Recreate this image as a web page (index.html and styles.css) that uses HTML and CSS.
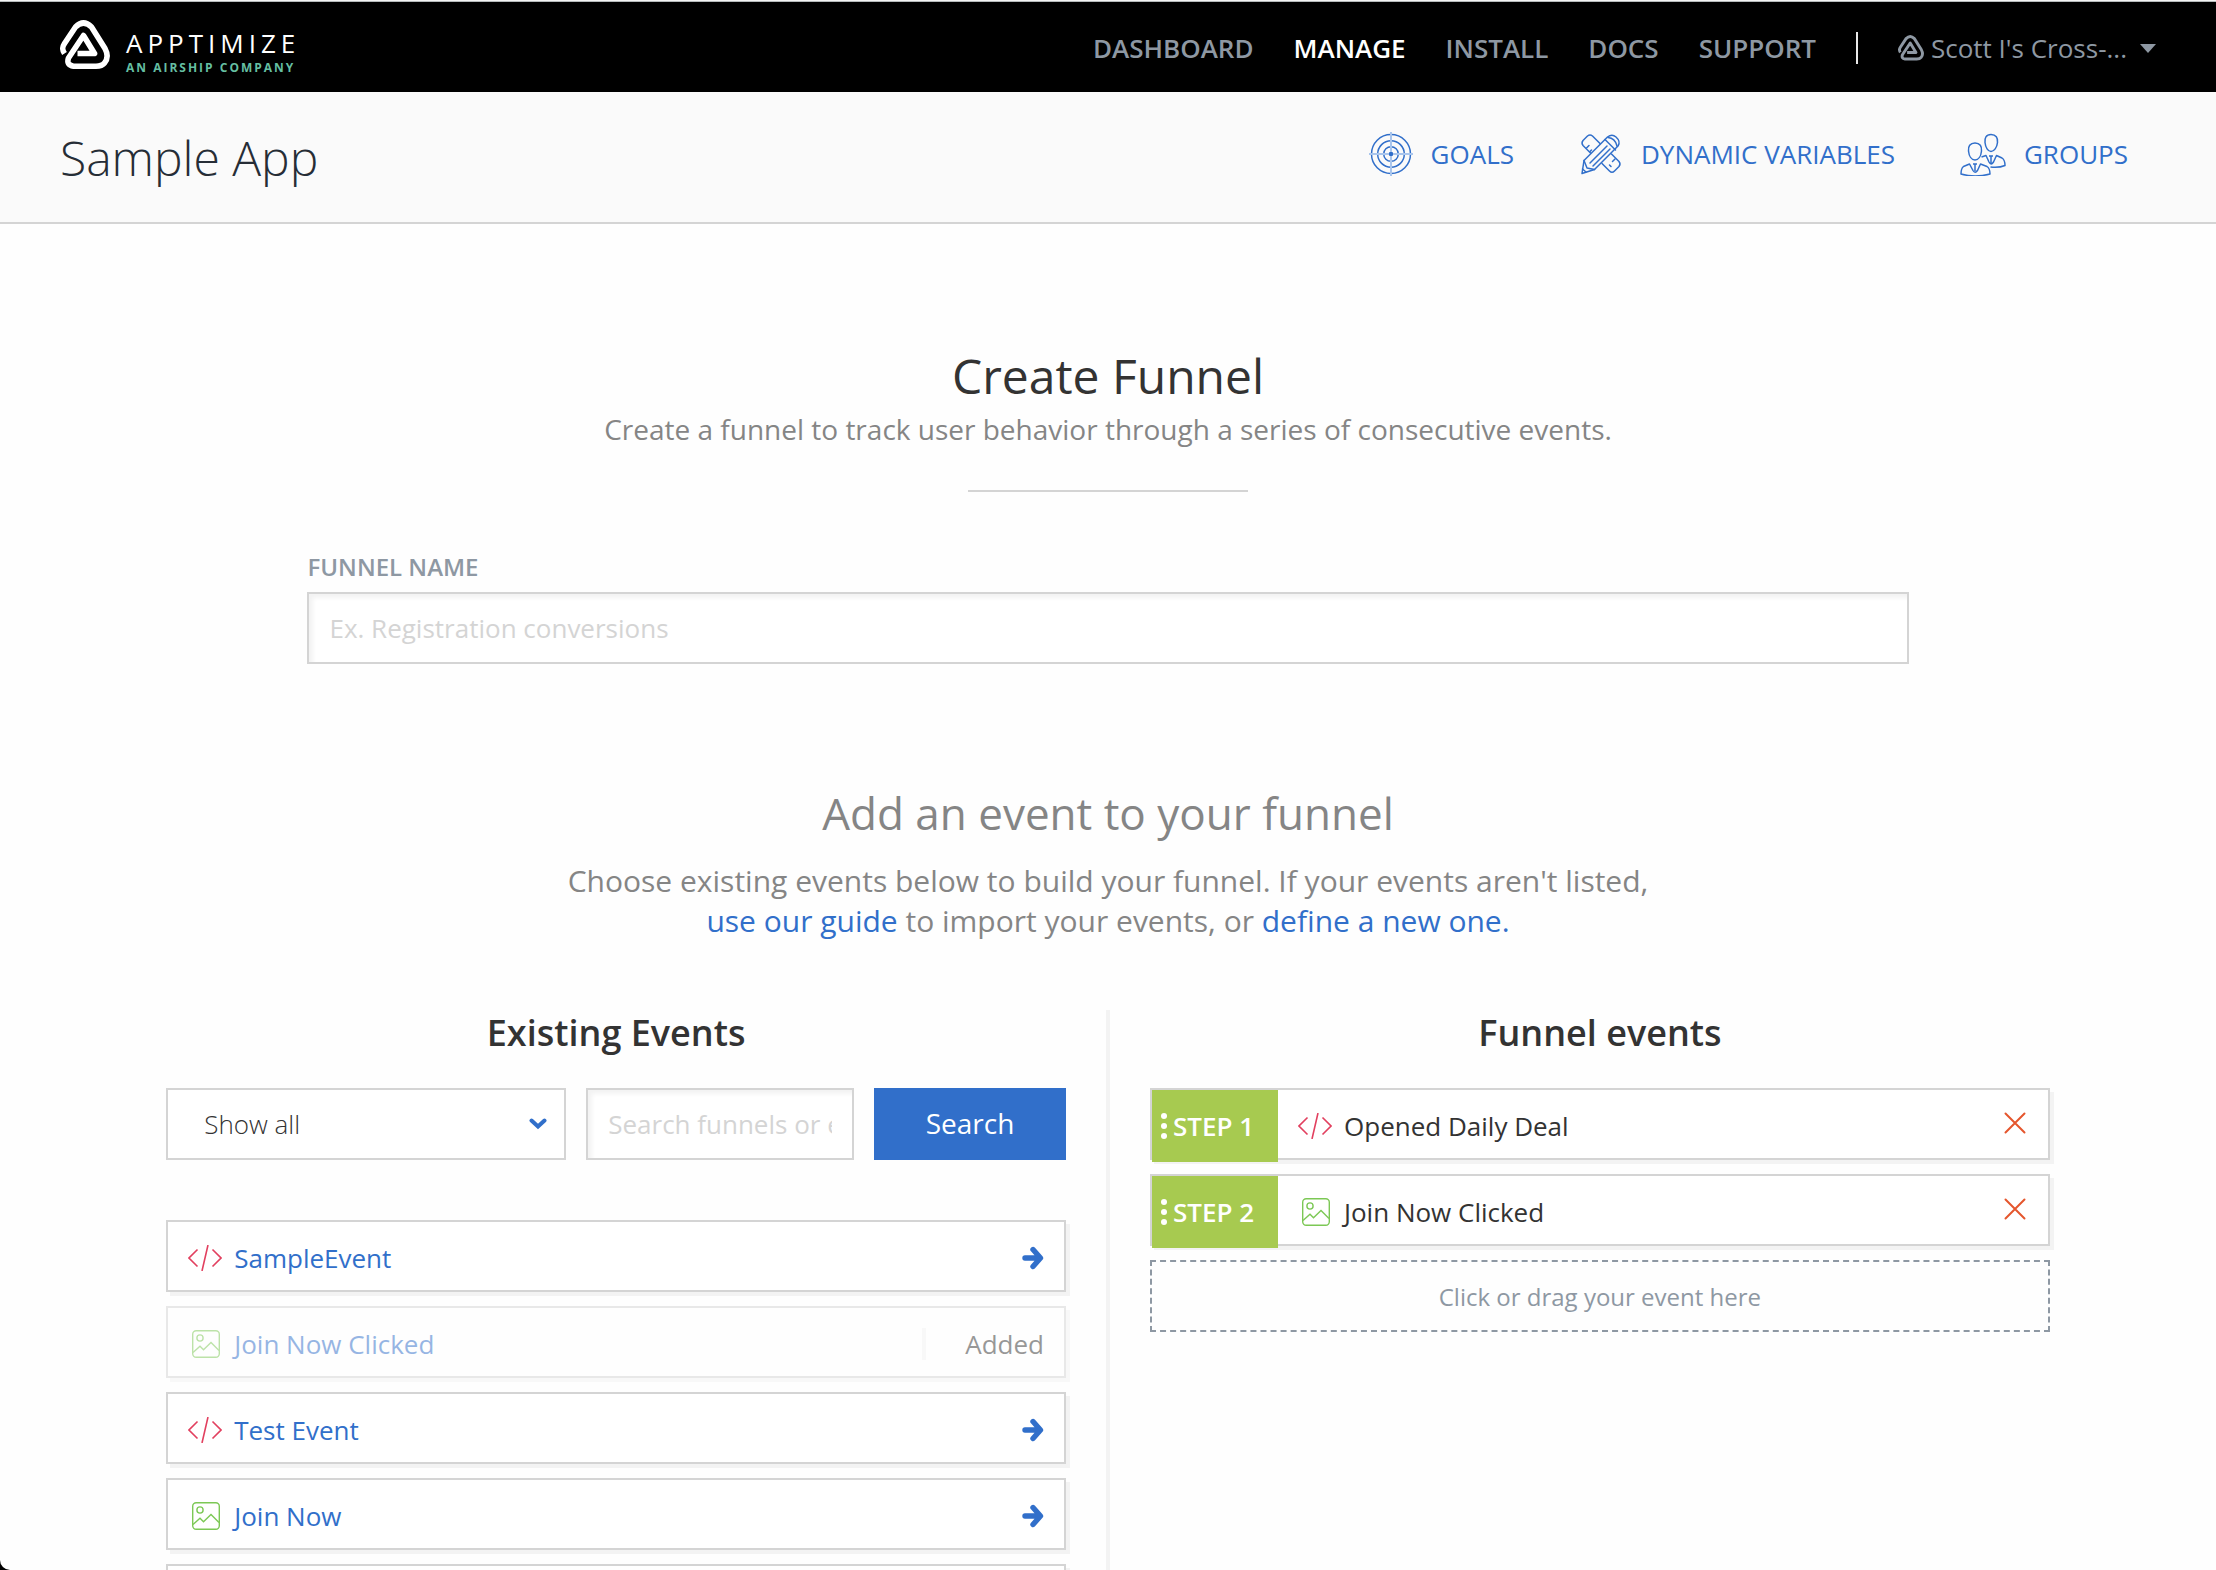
FILE: index.html
```html
<!DOCTYPE html>
<html lang="en">
<head>
<meta charset="utf-8">
<meta name="viewport" content="width=device-width, initial-scale=1">
<title>Create Funnel - Sample App</title>
<link rel="stylesheet" href="styles.css">
</head>
<body>
<svg class="sprite" aria-hidden="true">
  <symbol id="mark" viewBox="0 0 50 50">
    <path d="M4.500 33.500C1.500 29 2.500 26.500 4.500 23.500L15.500 7Q23.500-1 31.500 7L45 28.500Q49.500 37 44.500 43Q42 46.200 36 46.200H13.500Q6 45 8.500 38L23.500 15.500L34.500 33.500H17.500" fill="none" stroke="currentColor" stroke-width="5.600" stroke-linejoin="round"/>
  </symbol>
  <symbol id="code" viewBox="0 0 34 26">
    <path d="M9.500 4.500L1 13L9.500 21.500M24.500 4.500L33 13L24.500 21.500M20 0L14 26" fill="none" stroke="currentColor" stroke-width="1.600"/>
  </symbol>
  <symbol id="image" viewBox="0 0 28 28">
    <rect x=".7" y=".7" width="26.600" height="26.600" rx="3.500" fill="none" stroke="currentColor" stroke-width="1.400"/>
    <circle cx="8" cy="8" r="3.100" fill="none" stroke="currentColor" stroke-width="1.400"/>
    <path d="M1 22.500L8 16.200L11.500 19.700L19 12.500L27 20.500" fill="none" stroke="currentColor" stroke-width="1.400"/>
  </symbol>
  <symbol id="arrow" viewBox="0 0 22 24">
    <path d="M3 12H18M11 3.500L18.500 12L11 20.500" fill="none" stroke="currentColor" stroke-width="5.400" stroke-linecap="round" stroke-linejoin="round"/>
  </symbol>
  <symbol id="cross" viewBox="0 0 22 22">
    <path d="M1.500 1.500L20.500 20.500M20.500 1.500L1.500 20.500" fill="none" stroke="currentColor" stroke-width="2" stroke-linecap="round"/>
  </symbol>
</svg>

<header class="topbar">
  <a class="brand" href="#">
    <svg class="brand-mark"><use href="#mark"/></svg>
    <span class="brand-text">
      <span class="brand-name">APPTIMIZE</span>
      <span class="brand-tag">AN AIRSHIP COMPANY</span>
    </span>
  </a>
  <nav class="nav">
    <a href="#">DASHBOARD</a>
    <a class="active" href="#">MANAGE</a>
    <a href="#">INSTALL</a>
    <a href="#">DOCS</a>
    <a href="#">SUPPORT</a>
  </nav>
  <button class="account" type="button">
    <svg class="account-mark" aria-hidden="true"><use href="#mark"/></svg>
    <span>Scott I's Cross-...</span>
    <svg class="caret" viewBox="0 0 16 9" aria-hidden="true"><path d="M0 0H16L8 9Z" fill="currentColor"/></svg>
  </button>
</header>

<div class="subbar">
  <h1 class="app-name">Sample App</h1>
  <nav class="tools">
    <a href="#">
      <svg class="tool-icon" viewBox="0 0 44 44" fill="none" stroke="currentColor" stroke-width="1.500">
        <circle cx="22" cy="22" r="19.500"/><circle cx="22" cy="22" r="13.300"/><circle cx="22" cy="22" r="7.300"/>
        <path d="M22 0V44M0 22H44" stroke="#a9c5ec" stroke-width="2"/>
        <rect x="20" y="20" width="4" height="4" rx="1" fill="currentColor" stroke="none"/>
      </svg>
      GOALS
    </a>
    <a href="#">
      <svg class="tool-icon" viewBox="0 0 44 44" fill="none" stroke="currentColor" stroke-width="1.500" stroke-linejoin="round" stroke-linecap="round">
        <path d="M11.500 21L4 13.500Q2 11 4 8.500L8.500 4Q11 2 13.500 4L21 11.500M32.500 22L40 29.500Q42 32 40 34.500L35.500 39Q33 41.500 30.500 39L23 31.500"/>
        <path d="M7.500 16L10 13.500M11 19.500L12.500 18M36 27L33.500 29.500M32 34.500L30.500 33"/>
        <path d="M5 28.500L28.500 5Q33 1.500 37 5Q42 9.500 39 14L15.500 37.500L3 41.500Z"/>
        <path d="M26 7.500L36.500 18M29 5.500Q36 6 38 14M11 31L28 14M14 34L31 17M5 28.500L8 36L15.500 37.500M3.500 37L7 40"/>
      </svg>
      DYNAMIC VARIABLES
    </a>
    <a href="#">
      <svg class="tool-icon wide" viewBox="1 0 46 44" fill="none" stroke="currentColor" stroke-width="1.500" stroke-linejoin="round">
        <path d="M16 11C11 11 9 14.500 9.500 19C10 24 12.500 28 16 28S22 24 22.500 19C23 14.500 21 11 16 11Z"/>
        <path d="M32 2.500C27 2.500 25.500 6 26 10.500C26.500 15.500 29 19.500 32 19.500S38 15.500 38.500 10.500C39 6 37 2.500 32 2.500Z"/>
        <path d="M10.500 32L4.500 34.500Q2 36.500 2 42Q16 46 31 42Q31 36.500 28 34.500L21.500 32L18.500 38.500Q16 42 14 38.500ZM16 32V39M14 32H18"/>
        <path d="M22.500 25L27 23.500L30 30Q32 34 34.500 30L37.500 23.500L43 26Q46 28 46 33.500Q40 36 31.500 35M32 24V31.500M30 24H34"/>
      </svg>
      GROUPS
    </a>
  </nav>
</div>

<main class="page">
  <section class="intro">
    <h2 class="title">Create Funnel</h2>
    <p class="lead">Create a funnel to track user behavior through a series of consecutive events.</p>
    <hr class="rule">
  </section>

  <div class="name-field">
    <label for="funnel-name">FUNNEL NAME</label>
    <input class="text-input" id="funnel-name" type="text" placeholder="Ex. Registration conversions">
  </div>

  <section class="add">
    <h2 class="add-title">Add an event to your funnel</h2>
    <p class="add-text">Choose existing events below to build your funnel. If your events aren't listed,<br><a href="#">use our guide</a> to import your events, or <a href="#">define a new one.</a></p>
  </section>

  <div class="columns">
    <section class="column">
      <h3 class="column-title">Existing Events</h3>
      <form class="filters">
        <div class="select-wrap">
          <select class="select" aria-label="Event filter"><option>Show all</option></select>
          <svg class="chevron" viewBox="0 0 18 12" aria-hidden="true"><path d="M2.500 2.500L9 8.500L15.500 2.500" fill="none" stroke="currentColor" stroke-width="4" stroke-linecap="round"/></svg>
        </div>
        <input class="text-input search" type="text" aria-label="Search funnels or events" placeholder="Search funnels or events">
        <button class="search-button" type="button">Search</button>
      </form>
      <ul class="list events">
        <li class="row"><svg class="icon code"><use href="#code"/></svg><a href="#">SampleEvent</a><svg class="arrow"><use href="#arrow"/></svg></li>
        <li class="row added"><svg class="icon image"><use href="#image"/></svg><a href="#">Join Now Clicked</a><span class="added-note">Added</span></li>
        <li class="row"><svg class="icon code"><use href="#code"/></svg><a href="#">Test Event</a><svg class="arrow"><use href="#arrow"/></svg></li>
        <li class="row"><svg class="icon image"><use href="#image"/></svg><a href="#">Join Now</a><svg class="arrow"><use href="#arrow"/></svg></li>
        <li class="row"></li>
      </ul>
    </section>
    <div class="divider"></div>
    <section class="column">
      <h3 class="column-title">Funnel events</h3>
      <ol class="list">
        <li class="row step">
          <span class="badge"><svg class="grip" viewBox="0 0 6 26"><circle cx="3" cy="3" r="3"/><circle cx="3" cy="13" r="3"/><circle cx="3" cy="23" r="3"/></svg>STEP 1</span>
          <svg class="icon code"><use href="#code"/></svg><span>Opened Daily Deal</span>
          <button class="remove" type="button" aria-label="Remove step 1"><svg><use href="#cross"/></svg></button>
        </li>
        <li class="row step">
          <span class="badge"><svg class="grip" viewBox="0 0 6 26"><circle cx="3" cy="3" r="3"/><circle cx="3" cy="13" r="3"/><circle cx="3" cy="23" r="3"/></svg>STEP 2</span>
          <svg class="icon image"><use href="#image"/></svg><span>Join Now Clicked</span>
          <button class="remove" type="button" aria-label="Remove step 2"><svg><use href="#cross"/></svg></button>
        </li>
        <li class="drop">Click or drag your event here</li>
      </ol>
    </section>
  </div>
</main>
</body>
</html>
```
FILE: styles.css
```css
* { box-sizing: border-box; }

html { background: #000; }

body {
  margin: 0;
  height: 100vh;
  overflow: hidden;
  border-top: 1px solid #f4f4f4;
  border-bottom-left-radius: 10px;
  background: #fefefe;
  color: #333;
  font: 26px/36px "Open Sans", "Noto Sans", sans-serif;
}

h1, h2, h3, p, ul, ol { margin: 0; padding: 0; }
a { color: #316fca; text-decoration: none; }
svg { display: block; flex: none; }
input, select, button { font: inherit; border-radius: 0; margin: 0; }
.sprite { position: absolute; width: 0; height: 0; }

/* Top bar */
.topbar {
  display: flex;
  align-items: center;
  height: 91px;
  padding: 2px 60px 0;
  border-top: 1px solid #b5b9bb;
  background: #000;
  color: #8e98a3;
}
.brand { display: flex; align-items: flex-start; gap: 16px; margin-right: auto; color: #fff; }
.brand-mark { width: 50px; height: 50px; }
.brand-text { display: flex; flex-direction: column; }
.brand-name { font-size: 26px; line-height: 34px; padding-top: 6px; letter-spacing: 5px; }
.brand-tag { color: #65bfa2; font-size: 12px; font-weight: 700; line-height: 16px; letter-spacing: 2px; }
.nav { display: flex; gap: 40px; padding-right: 40px; font-weight: 600; }
.nav a { color: inherit; }
.nav .active { color: #fff; }
.account {
  display: flex;
  align-items: center;
  gap: 7px;
  height: 32px;
  padding: 0 0 0 40px;
  border: 0;
  border-left: 2px solid #e8e8e8;
  background: none;
  color: inherit;
}
.account-mark { width: 26px; height: 26px; }
.caret { width: 16px; height: 9px; margin-left: 6px; }

/* Application bar */
.subbar {
  display: flex;
  align-items: center;
  justify-content: space-between;
  height: 132px;
  padding: 0 88px 0 60px;
  border-bottom: 2px solid #d4d4d4;
  background: #fafafa;
}
.app-name { padding-top: 2px; color: #262d36; font-size: 48px; font-weight: 300; line-height: 66px; }
.tools { display: flex; gap: 65px; padding-bottom: 6px; }
.tools a { display: flex; align-items: center; gap: 18px; }
.tool-icon { width: 44px; height: 44px; }
.tool-icon.wide { width: 46px; }

/* Heading and name */
.page { width: 85%; margin: 0 auto; }
.intro { padding-top: 119px; text-align: center; }
.title { font-size: 48px; font-weight: 400; line-height: 66px; }
.lead { color: #858585; font-size: 28px; line-height: 40px; }
.rule { width: 280px; height: 2px; margin: 41px auto 0; border: 0; background: #d4d4d4; }
.name-field { display: flex; flex-direction: column; gap: 7px; width: 85%; margin: 57px auto 0; }
.name-field label { color: #8e98a3; font-size: 24px; font-weight: 600; line-height: 36px; }
.text-input {
  width: 100%;
  height: 72px;
  padding: 0 20px;
  border: 2px solid #d4d4d4;
  background: #fff;
  box-shadow: inset 4px 4px 4px #f3f3f3;
}
.text-input::placeholder { color: #d4d4d4; opacity: 1; }

/* Add an event */
.add { padding-top: 119px; color: #858585; text-align: center; }
.add-title { font-size: 44px; font-weight: 400; line-height: 60px; }
.add-text { margin-top: 18px; font-size: 30px; line-height: 40px; }

.columns { display: flex; gap: 40px; margin-top: 69px; }
.column { flex: 1 1 0; min-width: 0; }
.divider { flex: none; width: 4px; background: #f3f3f3; }
.column-title { margin-bottom: 32px; font-size: 36px; font-weight: 600; line-height: 46px; text-align: center; }

.filters { display: flex; gap: 20px; }
.select-wrap { display: grid; flex: none; align-items: center; width: 400px; }
.select {
  grid-area: 1 / 1;
  width: 100%;
  height: 72px;
  padding: 0 36px;
  border: 2px solid #d4d4d4;
  background: #fff;
  color: #333;
  font-weight: 300;
  appearance: none;
}
.chevron { grid-area: 1 / 1; justify-self: end; width: 18px; height: 12px; margin-right: 19px; color: #316fca; pointer-events: none; }
.search { flex: 1 1 0; min-width: 0; }
.search-button { flex: none; width: 192px; height: 72px; padding: 0 0 2px; border: 0; background: #316fca; color: #fff; font-size: 28px; }

/* Event rows */
.list { display: flex; flex-direction: column; gap: 14px; list-style: none; }
.events { margin-top: 60px; }
.row {
  display: flex;
  align-items: center;
  height: 72px;
  padding: 4px 20px 0;
  border: 2px solid #d4d4d4;
  background: #fff;
  box-shadow: 4px 4px 0 #f3f3f3;
}
.icon { width: 34px; height: 26px; margin-right: 12px; }
.icon.code { color: #e2405f; }
.icon.image { width: 28px; height: 28px; margin: 0 14px 0 4px; color: #7cc855; }
.arrow { width: 22px; height: 24px; margin-left: auto; color: #316fca; }
.added { opacity: .5; }
.added-note { margin-left: auto; padding-left: 39px; border-left: 4px solid #f3f3f3; line-height: 32px; }

.step { padding: 4px 22px 0 0; }
.badge {
  display: flex;
  align-items: center;
  gap: 6px;
  align-self: flex-start;
  flex: none;
  width: 126px;
  height: 72px;
  margin: -4px 20px 0 0;
  padding-left: 9px;
  background: #a7ca50;
  color: #fff;
  font-weight: 600;
}
.grip { width: 6px; height: 26px; fill: #fff; }
.remove { margin-left: auto; padding: 0 0 6px; border: 0; background: none; color: #e5562d; }
.remove svg { width: 22px; height: 22px; }
.drop {
  height: 72px;
  border: 2px dashed #8e98a3;
  color: #8e98a3;
  font-size: 24px;
  line-height: 70px;
  text-align: center;
}
```
